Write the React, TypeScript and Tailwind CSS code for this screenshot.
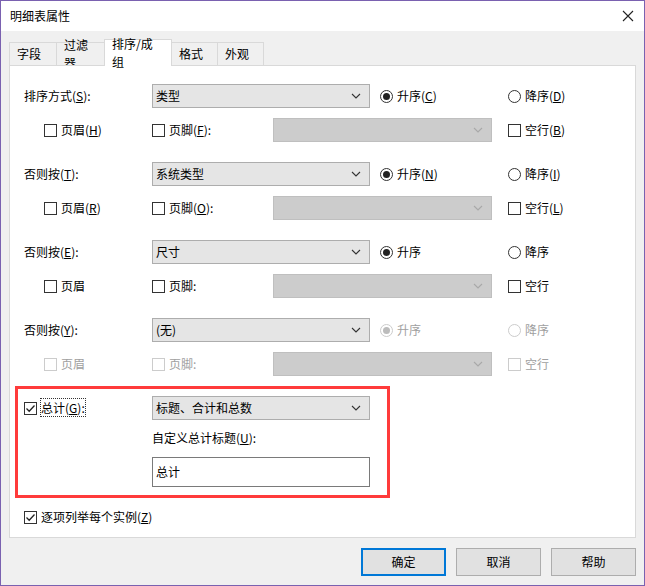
import React from "react";

const F = { fontFamily: '"Noto Sans CJK SC","Microsoft YaHei",sans-serif' };

function U({ c }: { c: string }) {
  return <span className="underline">{c}</span>;
}
function Chk({ checked, disabled, children }: { checked?: boolean; disabled?: boolean; children?: React.ReactNode }) {
  return (
    <div className={"flex items-center gap-[4px] " + (disabled ? "text-[#a0a0a0]" : "")}>
      <div className={"w-[13px] h-[13px] border bg-white flex items-center justify-center " + (disabled ? "border-[#cccccc]" : "border-[#333]")}>
        {checked && (
          <svg width="11" height="11" viewBox="0 0 11 11"><path d="M1.5 5.5 L4.2 8.2 L9.5 2.5" fill="none" stroke="#222" strokeWidth="1.3" /></svg>
        )}
      </div>
      <span>{children}</span>
    </div>
  );
}
function Radio({ checked, disabled, children }: { checked?: boolean; disabled?: boolean; children?: React.ReactNode }) {
  return (
    <div className={"flex items-center gap-[4px] " + (disabled ? "text-[#a0a0a0]" : "")}>
      <div className={"w-[13px] h-[13px] rounded-full border bg-white flex items-center justify-center " + (disabled ? "border-[#cccccc]" : "border-[#333]")}>
        {checked && <div className={"w-[7px] h-[7px] rounded-full " + (disabled ? "bg-[#bcbcbc]" : "bg-[#222]")} />}
      </div>
      <span>{children}</span>
    </div>
  );
}
function Combo({ text, disabled, w }: { text?: string; disabled?: boolean; w: number }) {
  return (
    <div
      style={{ width: w }}
      className={"h-[24px] border flex items-center justify-between pl-[3px] pr-[8px] " + (disabled ? "bg-[#cccccc] border-[#bfbfbf]" : "bg-[#e5e5e5] border-[#adadad]")}
    >
      <span>{text}</span>
      <svg width="10" height="6" viewBox="0 0 10 6"><path d="M1 1 L5 5 L9 1" fill="none" stroke={disabled ? "#a8a8a8" : "#333"} strokeWidth="1.1" /></svg>
    </div>
  );
}

function Group({ label, combo, asc, desc, h, f, blank, dis, last }: any) {
  return (
    <div className={"flex flex-col gap-[10px] " + (last ? "" : "mb-[20px]")}>
      <div className="flex items-center h-[24px]">
        <div className={"w-[128px] " + (dis ? "" : "")}>{label}</div>
        <Combo w={218} text={combo} />
        <div className="w-[10px]" />
        <div className="w-[128px]"><Radio checked disabled={dis}>{asc}</Radio></div>
        <Radio disabled={dis}>{desc}</Radio>
      </div>
      <div className="flex items-center h-[24px]">
        <div className="w-[20px]" />
        <div className="w-[108px]"><Chk disabled={dis}>{h}</Chk></div>
        <div className="w-[121px]"><Chk disabled={dis}>{f}</Chk></div>
        <Combo w={219} disabled />
        <div className="w-[16px]" />
        <Chk disabled={dis}>{blank}</Chk>
      </div>
    </div>
  );
}

export default function App() {
  return (
    <div style={F} className="w-[645px] h-[586px] bg-[#f0f0f0] border border-[#7a61b0] text-[12px] text-black flex flex-col relative overflow-hidden">
      <div className="h-[30px] bg-white flex items-center justify-between pl-[9px] pr-[10px] shrink-0">
        <span className="text-[12px]">明细表属性</span>
        <svg width="12" height="12" viewBox="0 0 12 12"><path d="M1 1 L11 11 M11 1 L1 11" stroke="#222" strokeWidth="1.1" /></svg>
      </div>
      <div className="flex items-end pl-[8px] h-[34px] shrink-0">
        {["字段", "过滤器"].map((t, i) => (
          <div key={t} className="h-[23px] px-[7px] border border-b-0 border-[#d9d9d9] bg-[#f0f0f0] flex items-center -mr-px" style={{ width: i === 0 ? 48 : 49 }}>{t}</div>
        ))}
        <div className="h-[27px] w-[68px] border border-b-0 border-[#d9d9d9] bg-white flex items-center px-[7px] relative z-10 -mb-px -mr-px">排序/成组</div>
        {["格式", "外观"].map((t) => (
          <div key={t} className="h-[23px] w-[47px] px-[7px] border border-b-0 border-[#d9d9d9] bg-[#f0f0f0] flex items-center -mr-px">{t}</div>
        ))}
      </div>
      <div className="mx-[8px] h-[473px] bg-white border border-[#d9d9d9] pt-[18px] pl-[14px] flex flex-col">
        <Group label={<>排序方式(<U c="S" />):</>} combo="类型" asc={<>升序(<U c="C" />)</>} desc={<>降序(<U c="D" />)</>} h={<>页眉(<U c="H" />)</>} f={<>页脚(<U c="F" />):</>} blank={<>空行(<U c="B" />)</>} />
        <Group label={<>否则按(<U c="T" />):</>} combo="系统类型" asc={<>升序(<U c="N" />)</>} desc={<>降序(<U c="I" />)</>} h={<>页眉(<U c="R" />)</>} f={<>页脚(<U c="O" />):</>} blank={<>空行(<U c="L" />)</>} />
        <Group label={<>否则按(<U c="E" />):</>} combo="尺寸" asc="升序" desc="降序" h="页眉" f="页脚:" blank="空行" />
        <Group last dis label={<>否则按(<U c="Y" />):</>} combo="(无)" asc="升序" desc="降序" h="页眉" f="页脚:" blank="空行" />
        <div className="mt-[10px] -ml-[9px] w-[375px] h-[112px] border-[3px] border-[#ff3b3b] pt-[7px] pl-[6px] flex flex-col">
          <div className="flex items-center h-[24px]">
            <div className="w-[128px]"><Chk checked><span className="outline outline-1 outline-dotted outline-[#333]">总计(<U c="G" />):</span></Chk></div>
            <Combo w={218} text="标题、合计和总数" />
          </div>
          <div className="ml-[128px] mt-[8px] h-[20px] flex items-center">自定义总计标题(<U c="U" />):</div>
          <div className="ml-[128px] mt-[9px] w-[218px] h-[30px] border border-[#7a7a7a] bg-white flex items-center pl-[3px]">总计</div>
        </div>
        <div className="mt-[9px] h-[20px] flex items-center"><Chk checked>逐项列举每个实例(<U c="Z" />)</Chk></div>
      </div>
      <div className="flex justify-end gap-[10px] pr-[8px] mt-[10px]">
        <div className="w-[85px] h-[28px] bg-[#e1e1e1] border-2 border-[#0078d7] flex items-center justify-center">确定</div>
        <div className="w-[85px] h-[28px] bg-[#e1e1e1] border border-[#adadad] flex items-center justify-center">取消</div>
        <div className="w-[85px] h-[28px] bg-[#e1e1e1] border border-[#adadad] flex items-center justify-center">帮助</div>
      </div>
    </div>
  );
}
